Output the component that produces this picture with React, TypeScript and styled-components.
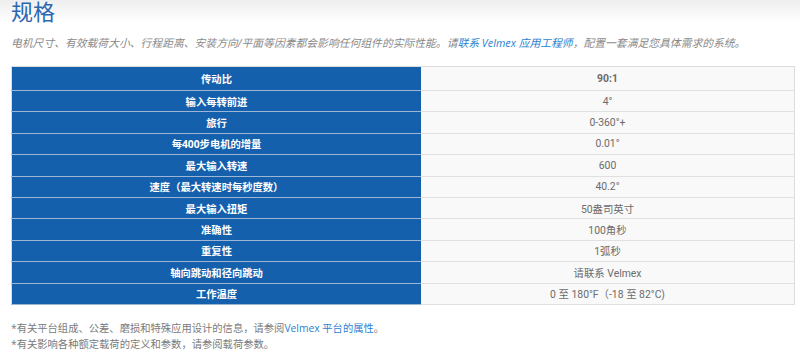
import React from 'react';
import styled, { createGlobalStyle } from 'styled-components';

const GlobalStyle = createGlobalStyle`
    html, body {
        margin: 0;
        padding: 0;
        background: #ffffff;
    }
    body {
        font-family: "Open Sans", "Noto Sans CJK SC", sans-serif;
        width: 800px;
        height: 360px;
        overflow: hidden;
    }
`;

const Page = styled.div`
    height: 360px;
    padding: 0 5px 0 11px;
    box-sizing: border-box;
    background: linear-gradient(to bottom, #ececec 0px, #ffffff 26px);
`;

const Title = styled.h2`
    margin: -3px 0 0;
    font-size: 22px;
    line-height: 28px;
    font-weight: 400;
    color: #2b67b1;
`;

const Intro = styled.p`
    margin: 9px 0 0;
    font-size: 10.8px;
    line-height: 18px;
    font-style: italic;
    color: #8a8a8a;
    white-space: nowrap;
`;

const Link = styled.a`
    color: #2b7fd0;
    text-decoration: none;
`;

const Table = styled.table`
    width: 784px;
    margin-top: 14px;
    border-collapse: collapse;
    border: 1px solid #dcdcdc;
`;

const Row = styled.tr<{ $first?: boolean }>`
    height: ${(p) => (p.$first ? '24px' : '21.4px')};
`;

const Label = styled.th`
    width: 409px;
    padding: 0;
    background: #1560ac;
    color: #ffffff;
    font-size: 10.3px;
    font-weight: 700;
    text-align: center;
    border-bottom: 1px solid #9db6d6;
`;

const Value = styled.td<{ $bold?: boolean }>`
    padding: 0;
    background: #f9f9f9;
    color: #6b6b6b;
    font-family: Roboto, "Noto Sans CJK SC", sans-serif;
    font-size: 10.4px;
    text-align: center;
    font-weight: ${(p) => (p.$bold ? 700 : 400)};
    border-bottom: 1px solid #e0e0e0;
    border-right: 1px solid #dcdcdc;
`;

const Notes = styled.div`
    margin-top: 15px;
    font-size: 10.3px;
    line-height: 16px;
    color: #7a7a7a;
`;

const Note = styled.p`
    margin: 0;
`;

const specs: [string, string][] = [
    ['传动比', '90:1'],
    ['输入每转前进', '4°'],
    ['旅行', '0-360°+'],
    ['每400步电机的增量', '0.01°'],
    ['最大输入转速', '600'],
    ['速度（最大转速时每秒度数）', '40.2°'],
    ['最大输入扭矩', '50盎司英寸'],
    ['准确性', '100角秒'],
    ['重复性', '1弧秒'],
    ['轴向跳动和径向跳动', '请联系 Velmex'],
    ['工作温度', '0 至 180°F（-18 至 82°C)'],
];

const App: React.FC = () => {
    return (
        <>
            <GlobalStyle />
            <Page>
                <Title>规格</Title>
                <Intro>
                    电机尺寸、有效载荷大小、行程距离、安装方向/平面等因素都会影响任何组件的实际性能。请
                    <Link href="#">联系 Velmex 应用工程师</Link>，配置一套满足您具体需求的系统。
                </Intro>

                <Table>
                    <tbody>
                        {specs.map(([label, value], i) => (
                            <Row key={label} $first={i === 0}>
                                <Label>{label}</Label>
                                <Value $bold={i === 0}>{value}</Value>
                            </Row>
                        ))}
                    </tbody>
                </Table>

                <Notes>
                    <Note>
                        *有关平台组成、公差、磨损和特殊应用设计的信息，请参阅
                        <Link href="#">Velmex 平台的属性</Link>。
                    </Note>
                    <Note>*有关影响各种额定载荷的定义和参数，请参阅载荷参数。</Note>
                </Notes>
            </Page>
        </>
    );
};

export default App;
